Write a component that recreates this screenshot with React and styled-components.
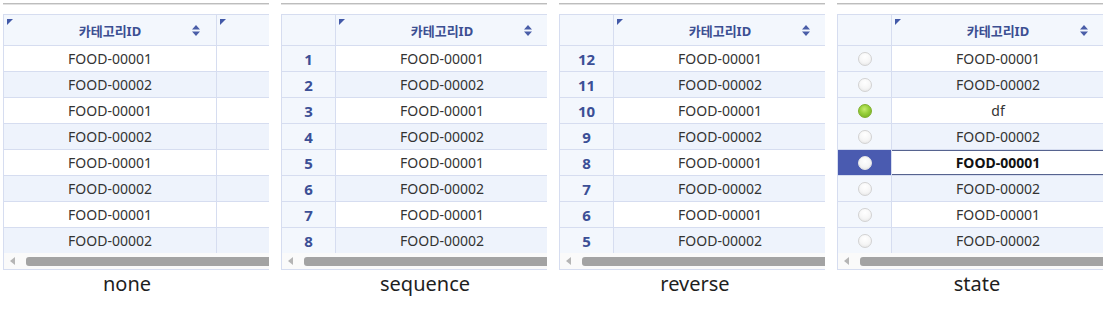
import React from 'react'
import styled, { createGlobalStyle, css } from 'styled-components'

const GlobalStyle = createGlobalStyle`
  html, body {
    margin: 0;
    background: #ffffff;
  }
  body {
    font-family: "Noto Sans", "Noto Sans CJK KR", sans-serif;
  }
`;

const Page = styled.div`
  display: flex;
  gap: 12px;
  padding: 3px 0 0 3px;
`;

const Panel = styled.div`
  width: 266px;
  display: flex;
  flex-direction: column;
`;

const TopRule = styled.div`
  height: 2px;
  box-sizing: border-box;
  border-top: 1px solid #bdbdbd;
  border-bottom: 1px solid #e2e2e2;
`;

const Frame = styled.div`
  margin-top: 9px;
  border: 1px solid #d6ddf0;
  border-right: none;
  overflow: hidden;
  display: flex;
  flex-direction: column;
`;

const Row = styled.div`
  display: flex;
  width: 420px;
  height: ${p => (p.head ? 30 : 25)}px;
  border-bottom: 1px solid #d6ddf0;
  background: ${p => (p.head ? '#f3f7fd' : p.alt ? '#eef3fc' : '#ffffff')};
`;

const Body = styled.div`
  height: 207px;
  overflow: hidden;
`;

const Cell = styled.div`
  position: relative;
  box-sizing: border-box;
  width: ${p => p.w}px;
  flex: ${p => (p.w ? 'none' : '1')};
  border-right: 1px solid #d6ddf0;
  display: flex;
  align-items: center;
  justify-content: center;
  font-size: 14px;
  color: #333333;
  ${p => p.bold && css`
    font-weight: 700;
    color: #111111;
  `}
  ${p => p.focus && css`
    box-shadow: inset 0 1px 0 #56638f, inset 0 -1px 0 #56638f;
  `}
`;

const LeadCell = styled(Cell)`
  background: ${p => (p.sel ? '#4a5bb0' : '#f3f7fd')};
  font-weight: 700;
  font-size: 15px;
  color: #3b4f96;
`;

const HeadText = styled.span`
  font-size: 13px;
  font-weight: 700;
  color: #3c4f92;
`;

const Corner = styled.span`
  position: absolute;
  top: 4px;
  left: 3px;
  width: 0;
  height: 0;
  border-top: 6px solid #4259a8;
  border-right: 6px solid transparent;
`;

const SortIcon = styled.svg`
  position: absolute;
  right: 16px;
  top: 10px;
`;

const Radio = styled.span`
  width: 14px;
  height: 14px;
  border-radius: 50%;
  box-sizing: border-box;
  ${p => p.on ? css`
    border: 1px solid #7fae2a;
    background: radial-gradient(circle at 45% 35%, #c6ec6e 0%, #96cf3a 45%, #6ea81f 100%);
  ` : p.sel ? css`
    border: 1px solid #e8e8e8;
    background: radial-gradient(circle at 50% 35%, #ffffff 0%, #f4f4f4 60%, #dcdcdc 100%);
  ` : css`
    border: 1px solid #d2d2d2;
    background: radial-gradient(circle at 50% 30%, #ffffff 0%, #f6f6f6 55%, #e2e2e2 100%);
  `}
`;

const ScrollBar = styled.div`
  height: 16px;
  display: flex;
  align-items: center;
  background: #fafafa;
  width: 420px;
`;

const Arrow = styled.span`
  width: 0;
  height: 0;
  margin-left: 6px;
  border-top: 4px solid transparent;
  border-bottom: 4px solid transparent;
  border-right: 5px solid #b5b5b5;
`;

const Thumb = styled.span`
  margin-left: 11px;
  flex: 1;
  height: 9px;
  border-radius: 3px;
  background: #a3a3a3;
`;

const Label = styled.div`
  margin-top: 1px;
  padding-left: ${p => (p.shift > 0 ? p.shift * 2 : 0)}px;
  padding-right: ${p => (p.shift < 0 ? -p.shift * 2 : 0)}px;
  text-align: center;
  font-size: 20px;
  line-height: 26px;
  color: #1e1e1e;
`;

const Sort = () => (
  <SortIcon width="8" height="11" viewBox="0 0 8 11">
    <path d="M4 0 L8 4.5 L0 4.5 Z M0 6.5 L8 6.5 L4 11 Z" fill="#4a5ea8" />
  </SortIcon>
);

const codes = ['FOOD-00001', 'FOOD-00002', 'FOOD-00001', 'FOOD-00002', 'FOOD-00001', 'FOOD-00002', 'FOOD-00001', 'FOOD-00002'];
const stateCodes = ['FOOD-00001', 'FOOD-00002', 'df', 'FOOD-00002', 'FOOD-00001', 'FOOD-00002', 'FOOD-00001', 'FOOD-00002'];

const grids = [
  { name: 'none', lead: null, shift: -9 },
  { name: 'sequence', lead: i => i + 1, shift: 11 },
  { name: 'reverse', lead: i => 12 - i, shift: 3 },
  { name: 'state', lead: 'state', shift: 7 },
];

const Grid = ({ mode }) => {
  const isState = mode.lead === 'state';
  const list = isState ? stateCodes : codes;
  return (
    <Frame>
      <Row head>
        {mode.lead && <LeadCell w={54} />}
        <Cell w={213}>
          <Corner />
          <HeadText>카테고리ID</HeadText>
          <Sort />
        </Cell>
        <Cell>{!mode.lead && <Corner />}</Cell>
      </Row>
      <Body>
        {list.map((code, i) => {
          const sel = isState && i === 4;
          return (
            <Row key={i} alt={i % 2 === 1}>
              {mode.lead && (
                <LeadCell w={54} sel={sel}>
                  {isState ? <Radio on={i === 2} sel={sel} /> : mode.lead(i)}
                </LeadCell>
              )}
              <Cell w={213} bold={sel} focus={sel}>{code}</Cell>
              <Cell />
            </Row>
          );
        })}
      </Body>
      <ScrollBar>
        <Arrow />
        <Thumb />
      </ScrollBar>
    </Frame>
  );
};

const App = () => {
  return (
    <>
      <GlobalStyle />
      <Page>
        {grids.map(g => (
          <Panel key={g.name}>
            <TopRule />
            <Grid mode={g} />
            <Label shift={g.shift}>{g.name}</Label>
          </Panel>
        ))}
      </Page>
    </>
  );
};

export default App
